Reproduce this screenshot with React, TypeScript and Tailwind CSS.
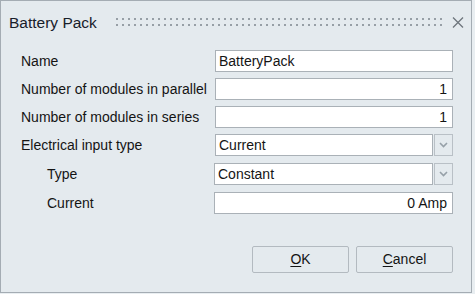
import { ReactNode } from 'react'

const font = { fontFamily: '"Liberation Sans", Arial, sans-serif' }

function Chevron() {
  return (
    <svg width="9" height="6" viewBox="0 0 9 6">
      <path d="M1 1 L4.5 4.5 L8 1" fill="none" stroke="#96a0a8" strokeWidth="1.6" />
    </svg>
  )
}

function Row({ label, indent, children, className = '' }: { label: string; indent?: boolean; children: ReactNode; className?: string }) {
  return (
    <div className={`flex items-center h-[22px] ${className}`}>
      <div className={`w-[194px] shrink-0 text-[14px] text-[#141414] ${indent ? 'pl-[26px]' : ''}`}>{label}</div>
      {children}
    </div>
  )
}

function TextBox({ value, right, shift }: { value: string; right?: boolean; shift?: boolean }) {
  return (
    <div
      className={`h-[22px] flex-1 bg-white border border-[#aab1b7] flex items-center text-[14px] text-[#141414] ${
        right ? 'justify-end pr-[5px]' : 'pl-[3px]'
      } ${shift ? '-ml-[1px]' : ''}`}
    >
      {value}
    </div>
  )
}

function Combo({ value, shift }: { value: string; shift?: boolean }) {
  return (
    <div className={`h-[22px] flex-1 flex ${shift ? '-ml-[1px]' : ''}`}>
      <div className="flex-1 bg-white border border-[#aab1b7] flex items-center pl-[3px] text-[14px] text-[#141414]">{value}</div>
      <div className="w-[19px] ml-[1px] border border-[#b9c0c6] flex items-center justify-center">
        <Chevron />
      </div>
    </div>
  )
}

export default function App() {
  return (
    <div className="w-[475px] h-[294px] bg-[#e9eef1]" style={font}>
      <div className="w-[472px] h-[293px] border border-[#a4acb3] bg-[#e4eaee] flex flex-col">
        {/* Title bar */}
        <div className="flex items-center h-[43px] pl-[8px] pr-[8px]">
          <span className="w-[107px] shrink-0 whitespace-nowrap text-[15.5px] text-[#18202a]">Battery Pack</span>
          <svg className="shrink-0" width="326" height="9" viewBox="0 0 326 9">
            <defs>
              <pattern id="grip" width="6" height="6" patternUnits="userSpaceOnUse">
                <rect x="0" y="0" width="2" height="2" fill="#979fa6" />
              </pattern>
            </defs>
            <rect x="0" y="0" width="326" height="9" fill="url(#grip)" />
          </svg>
          <svg className="ml-[10px] shrink-0" width="12" height="11" viewBox="0 0 12 11">
            <path d="M1 0.5 L11 10.5 M11 0.5 L1 10.5" stroke="#6e767d" strokeWidth="1.3" />
          </svg>
        </div>

        {/* Fields */}
        <div className="flex flex-col gap-[6px] pl-[20px] pr-[18px] mt-[6px]">
          <Row label="Name">
            <TextBox value="BatteryPack" />
          </Row>
          <Row label="Number of modules in parallel">
            <TextBox value="1" right />
          </Row>
          <Row label="Number of modules in series">
            <TextBox value="1" right />
          </Row>
          <Row label="Electrical input type">
            <Combo value="Current" />
          </Row>
          <Row label="Type" indent className="mt-[1px]">
            <Combo value="Constant" shift />
          </Row>
          <Row label="Current" indent className="mt-[1px]">
            <TextBox value="0 Amp" right shift />
          </Row>
        </div>

        {/* Buttons */}
        <div className="flex justify-end gap-[7px] pr-[18px] mt-[32px]">
          <button className="w-[97px] h-[27px] border border-[#b3bac0] rounded-[2px] text-[14px] text-[#141414]">
            <span className="underline underline-offset-2">O</span>K
          </button>
          <button className="w-[97px] h-[27px] border border-[#b3bac0] rounded-[2px] text-[14px] text-[#141414]">
            <span className="underline underline-offset-2">C</span>ancel
          </button>
        </div>
      </div>
    </div>
  )
}
